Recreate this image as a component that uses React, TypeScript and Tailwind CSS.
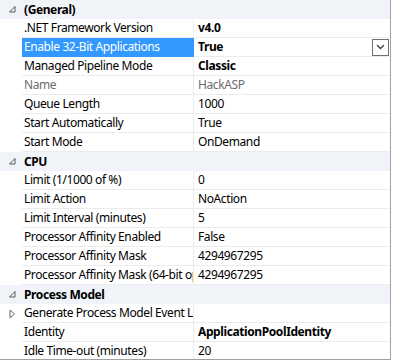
import React from 'react'

type Row =
  | { kind: 'cat'; label: string }
  | { kind: 'prop'; label: string; value: string; bold?: boolean; dim?: boolean; selected?: boolean; expander?: boolean }

const rows: Row[] = [
  { kind: 'cat', label: '(General)' },
  { kind: 'prop', label: '.NET Framework Version', value: 'v4.0', bold: true },
  { kind: 'prop', label: 'Enable 32-Bit Applications', value: 'True', bold: true, selected: true },
  { kind: 'prop', label: 'Managed Pipeline Mode', value: 'Classic', bold: true },
  { kind: 'prop', label: 'Name', value: 'HackASP', dim: true },
  { kind: 'prop', label: 'Queue Length', value: '1000' },
  { kind: 'prop', label: 'Start Automatically', value: 'True' },
  { kind: 'prop', label: 'Start Mode', value: 'OnDemand' },
  { kind: 'cat', label: 'CPU' },
  { kind: 'prop', label: 'Limit (1/1000 of %)', value: '0' },
  { kind: 'prop', label: 'Limit Action', value: 'NoAction' },
  { kind: 'prop', label: 'Limit Interval (minutes)', value: '5' },
  { kind: 'prop', label: 'Processor Affinity Enabled', value: 'False' },
  { kind: 'prop', label: 'Processor Affinity Mask', value: '4294967295' },
  { kind: 'prop', label: 'Processor Affinity Mask (64-bit option)', value: '4294967295' },
  { kind: 'cat', label: 'Process Model' },
  { kind: 'prop', label: 'Generate Process Model Event Log Entry', value: '', expander: true },
  { kind: 'prop', label: 'Identity', value: 'ApplicationPoolIdentity', bold: true },
  { kind: 'prop', label: 'Idle Time-out (minutes)', value: '20' },
]

function CollapseGlyph() {
  return (
    <svg width="7" height="7" viewBox="0 0 7 7">
      <path d="M6 0.5 L6 6 L0.5 6 Z" fill="none" stroke="#595959" strokeWidth="1" />
    </svg>
  )
}

function ExpandGlyph() {
  return (
    <svg width="7" height="10" viewBox="0 0 7 10">
      <path d="M1 1 L5.5 5 L1 9 Z" fill="none" stroke="#6b6b6b" strokeWidth="1" />
    </svg>
  )
}

export default function App() {
  return (
    <div
      className="w-[393px] h-[362px] bg-white overflow-hidden text-[12px] tracking-[-0.4px] text-black"
      style={{ fontFamily: '"Segoe UI", "Noto Sans", "Open Sans", sans-serif' }}
    >
      <div className="w-[391px] h-[360px] border-r border-b border-[#a0a0a0] overflow-hidden">
        {rows.map((r, i) =>
          r.kind === 'cat' ? (
            <div key={i} className="flex h-[19px] bg-[#f0f4f9]">
              <div className="w-[22px] flex items-center justify-center pl-[2px]">
                <CollapseGlyph />
              </div>
              <div className="flex-1 flex items-center pl-[2px] font-bold">{r.label}</div>
            </div>
          ) : (
            <div key={i} className="flex h-[19px]">
              <div className="w-[22px] flex items-center justify-center pl-[2px]">
                {r.expander && <ExpandGlyph />}
              </div>
              <div
                className={
                  'w-[172px] flex items-center pl-[2px] whitespace-nowrap overflow-hidden border-b border-r ' +
                  (r.selected ? 'bg-[#3399ff] text-white border-[#3399ff]' : 'border-[#ececec] ') +
                  (r.dim ? 'text-[#6d6d6d]' : '')
                }
              >
                {r.label}
              </div>
              <div
                className={
                  'flex-1 flex items-center pl-[4px] pr-[1px] whitespace-nowrap overflow-hidden border-b border-[#ececec] ' +
                  (r.bold ? 'font-bold ' : '') +
                  (r.dim ? 'text-[#6d6d6d]' : '')
                }
              >
                <span className="flex-1">{r.value}</span>
                {r.selected && (
                  <span className="w-[17px] h-[17px] border border-[#707070] flex items-center justify-center bg-white">
                    <svg width="9" height="6" viewBox="0 0 9 6">
                      <path d="M1 1 L4.5 4.5 L8 1" fill="none" stroke="#404040" strokeWidth="1.3" />
                    </svg>
                  </span>
                )}
              </div>
            </div>
          )
        )}
      </div>
    </div>
  )
}
